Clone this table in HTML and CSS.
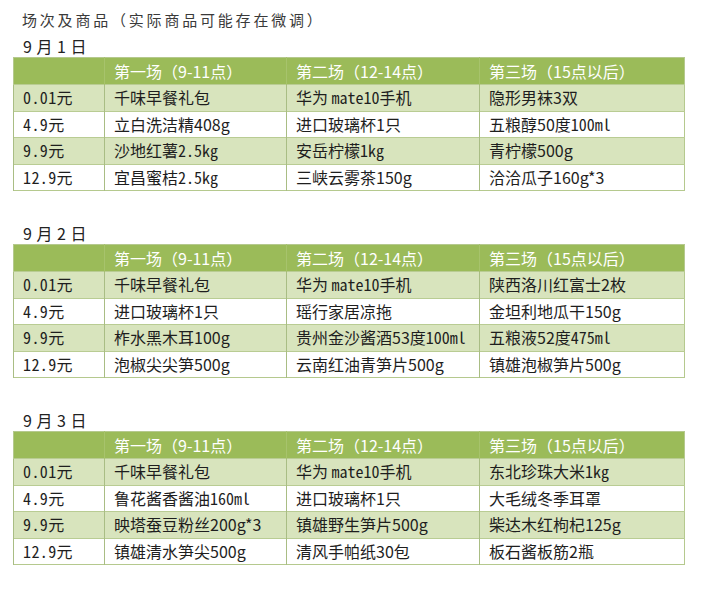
FILE: index.html
```html
<!DOCTYPE html>
<html lang="zh-CN">
<head>
<meta charset="utf-8">
<link rel="stylesheet" href="styles.css">
</head>
<body>
<div class="page">
  <div class="title">场次及商品（实际商品可能存在微调）</div>

  <div class="day day-first">9 月 1 日</div>
  <table class="sched">
    <colgroup><col class="c1"><col class="c2"><col class="c3"><col class="c4"></colgroup>
    <tr class="head"><th></th><th>第一场（9-11点）</th><th>第二场（12-14点）</th><th>第三场（15点以后）</th></tr>
    <tr class="band"><td class="price">0.01元</td><td>千味早餐礼包</td><td>华为 <span class="m">mate10</span>手机</td><td>隐形男袜3双</td></tr>
    <tr><td class="price">4.9元</td><td>立白洗洁精408g</td><td>进口玻璃杯1只</td><td>五粮醇50度<span class="m">100ml</span></td></tr>
    <tr class="band"><td class="price">9.9元</td><td>沙地红薯<span class="m">2.5kg</span></td><td>安岳柠檬<span class="m">1kg</span></td><td>青柠檬500g</td></tr>
    <tr><td class="price">12.9元</td><td>宜昌蜜桔<span class="m">2.5kg</span></td><td>三峡云雾茶150g</td><td>洽洽瓜子160g*3</td></tr>
  </table>

  <div class="day">9 月 2 日</div>
  <table class="sched">
    <colgroup><col class="c1"><col class="c2"><col class="c3"><col class="c4"></colgroup>
    <tr class="head"><th></th><th>第一场（9-11点）</th><th>第二场（12-14点）</th><th>第三场（15点以后）</th></tr>
    <tr class="band"><td class="price">0.01元</td><td>千味早餐礼包</td><td>华为 <span class="m">mate10</span>手机</td><td>陕西洛川红富士2枚</td></tr>
    <tr><td class="price">4.9元</td><td>进口玻璃杯1只</td><td>瑶行家居凉拖</td><td>金坦利地瓜干150g</td></tr>
    <tr class="band"><td class="price">9.9元</td><td>柞水黑木耳100g</td><td>贵州金沙酱酒53度<span class="m">100ml</span></td><td>五粮液52度<span class="m">475ml</span></td></tr>
    <tr><td class="price">12.9元</td><td>泡椒尖尖笋500g</td><td>云南红油青笋片500g</td><td>镇雄泡椒笋片500g</td></tr>
  </table>

  <div class="day">9 月 3 日</div>
  <table class="sched">
    <colgroup><col class="c1"><col class="c2"><col class="c3"><col class="c4"></colgroup>
    <tr class="head"><th></th><th>第一场（9-11点）</th><th>第二场（12-14点）</th><th>第三场（15点以后）</th></tr>
    <tr class="band"><td class="price">0.01元</td><td>千味早餐礼包</td><td>华为 <span class="m">mate10</span>手机</td><td>东北珍珠大米<span class="m">1kg</span></td></tr>
    <tr><td class="price">4.9元</td><td>鲁花酱香酱油<span class="m">160ml</span></td><td>进口玻璃杯1只</td><td>大毛绒冬季耳罩</td></tr>
    <tr class="band"><td class="price">9.9元</td><td>映塔蚕豆粉丝200g*3</td><td>镇雄野生笋片500g</td><td>柴达木红枸杞125g</td></tr>
    <tr><td class="price">12.9元</td><td>镇雄清水笋尖500g</td><td>清风手帕纸30包</td><td>板石酱板筋2瓶</td></tr>
  </table>
</div>
</body>
</html>
```

FILE: styles.css
```css
html, body {
  margin: 0;
  padding: 0;
  background: #ffffff;
}

body {
  font-family: "Noto Sans CJK SC", "Noto Sans", sans-serif;
  color: #222222;
}

.page {
  padding: 8px 0 0 13px;
  width: 670px;
}

.title {
  font-size: 15px;
  line-height: 24px;
  letter-spacing: 2.8px;
  color: #3a3a3a;
  padding-left: 9px;
}

.day {
  font-size: 16px;
  line-height: 22px;
  color: #222222;
  padding-left: 10px;
  margin-top: 31px;
  margin-bottom: 0;
  letter-spacing: 0.5px;
}

.day-first {
  margin-top: 3px;
}

.sched {
  border-collapse: collapse;
  table-layout: fixed;
  width: 671px;
  margin-top: 0;
  font-size: 16px;
  border: 1px solid #b5c98e;
}

.c1 { width: 91px; }
.c2 { width: 182px; }
.c3 { width: 193px; }
.c4 { width: 205px; }

.sched th {
  background: #9bbb59;
  color: #ffffff;
  font-weight: normal;
  text-align: left;
  height: 26px;
  padding: 0 0 0 9px;
  line-height: 26px;
  border-left: 1px solid #a7c36c;
  white-space: nowrap;
}

.sched th:first-child {
  border-left: none;
}

.sched td {
  height: 25.5px;
  padding: 0 0 0 9px;
  line-height: 25px;
  border-top: 1px solid #b9cc93;
  border-left: 1px solid #a9bd84;
  white-space: nowrap;
  color: #1e1e1e;
}

.sched tr.band td {
  background: #d8e4bd;
}

.price {
  font-family: "Noto Sans Mono CJK SC", "Noto Sans CJK SC", "Liberation Mono", monospace;
  letter-spacing: 0.4px;
}

.m {
  font-family: "Noto Sans Mono CJK SC", "Liberation Mono", monospace;
}
```
